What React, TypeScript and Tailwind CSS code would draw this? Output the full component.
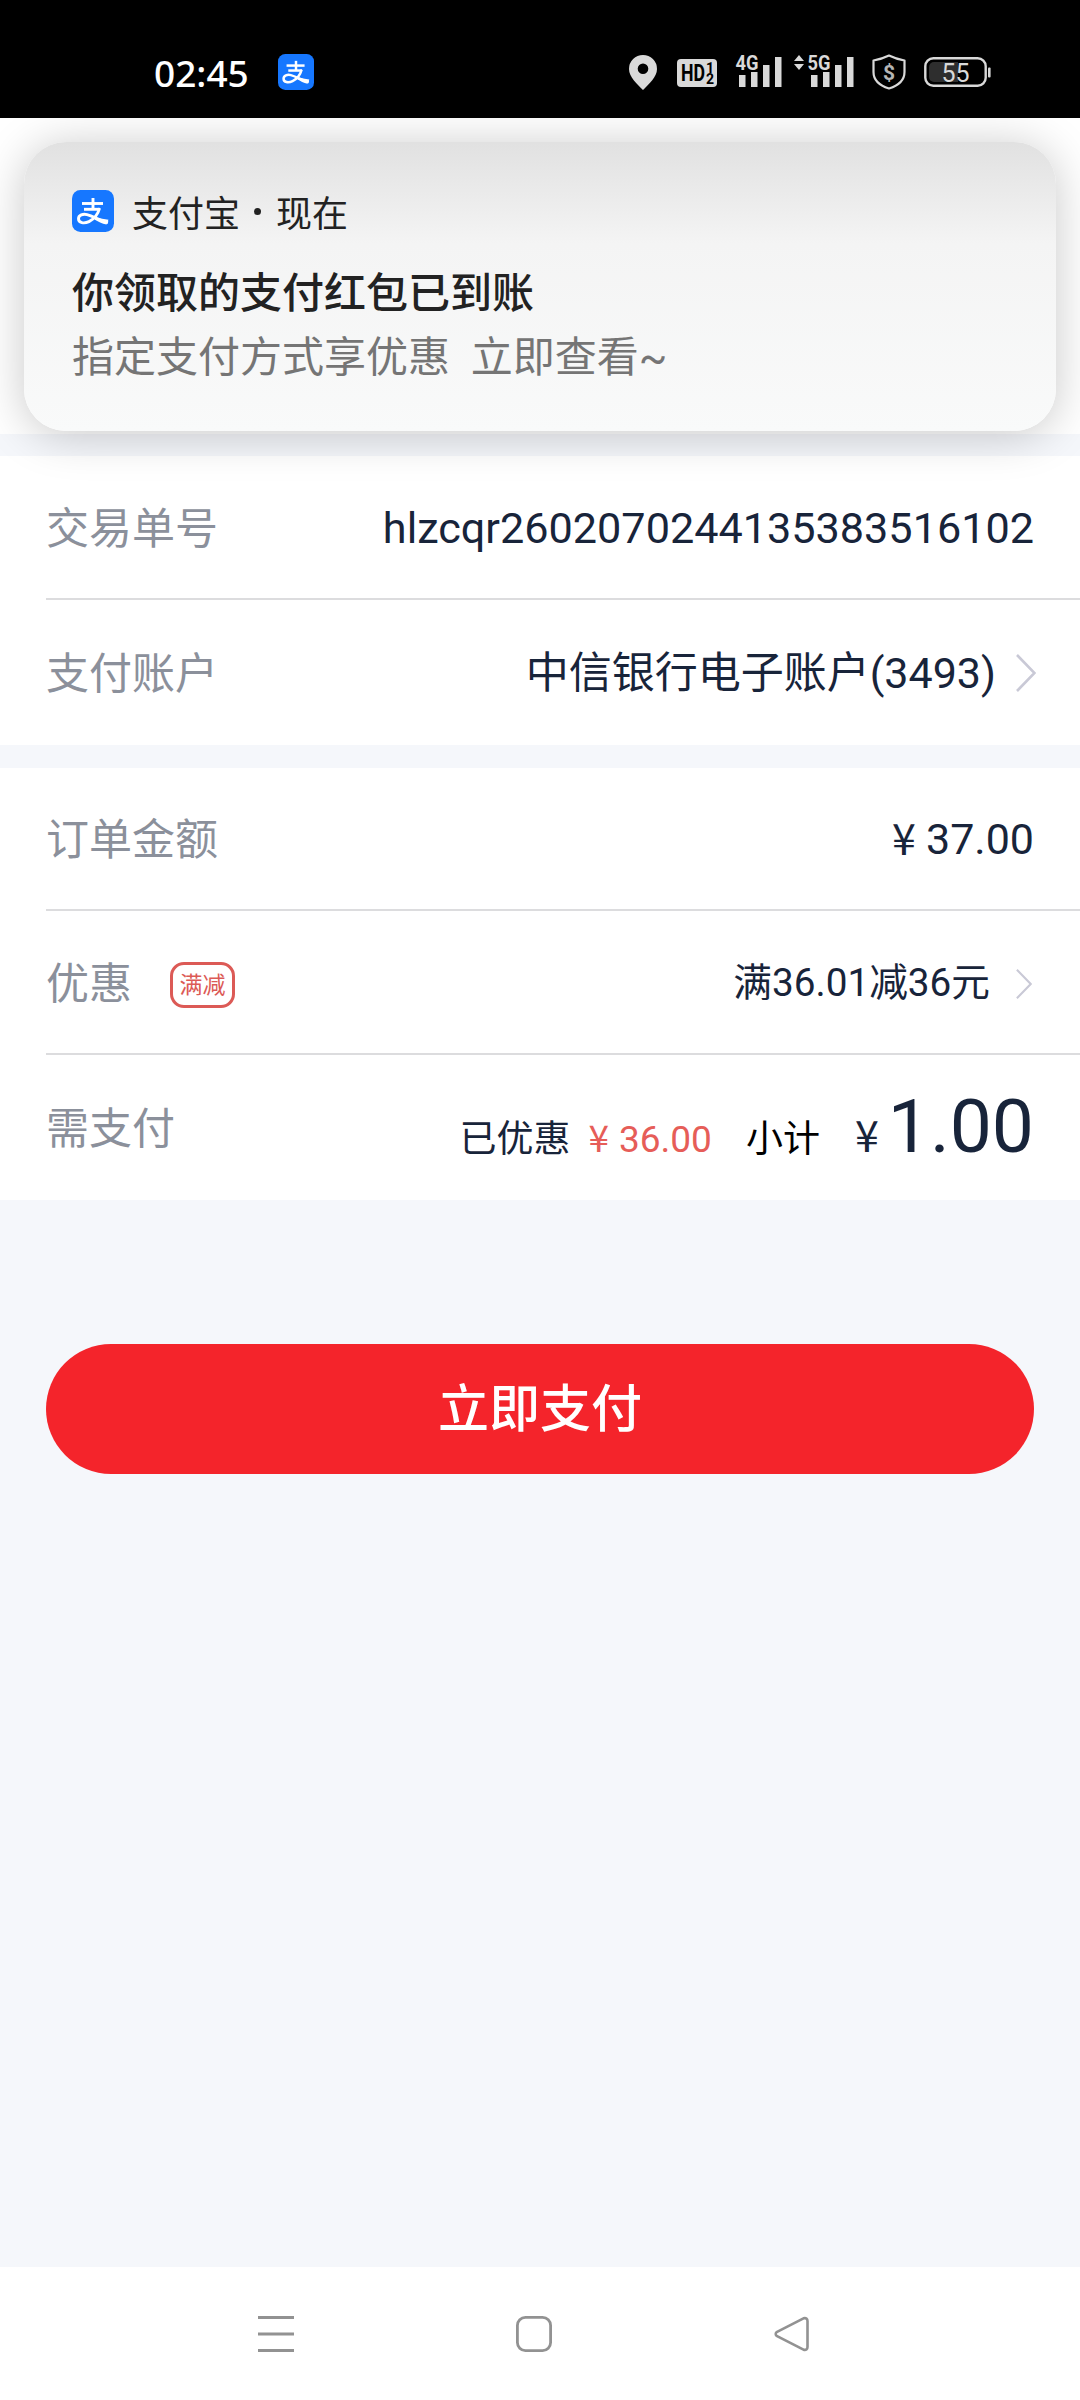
import type { ReactNode } from "react";

const CJK = "font-['Noto_Sans_CJK_SC',sans-serif]";

function AlipayLogo({ className }: { className?: string }) {
  return (
    <svg viewBox="0 0 42 42" className={className} fill="none">
      <rect width="42" height="42" rx="8.5" fill="#1677ff" />
      <g stroke="#fff" strokeWidth="2.9">
        <path d="M10 13.5H31" />
        <path d="M21 8V19" />
        <path d="M12 19.3H28" />
        <path d="M27.6 18.2C26 24 22.500 29 17 31.600C12 34 6.500 33 6.500 28.800C6.500 25 11 23.600 15 24.600C22 26.400 27 30.500 36 32.600" />
      </g>
      <path d="M24 27.800L36.500 29.800L34.500 34.600C30 34 26 31.500 22.500 29.500Z" fill="#fff" />
    </svg>
  );
}

function Signal({ label, arrows }: { label: string; arrows?: boolean }) {
  return (
    <svg viewBox="0 -8 64 52" className="h-[52px] w-16" fill="#d9d9d9">
      {arrows && <path d="M4 7L9 1L14 7ZM4 10L9 16L14 10Z" />}
      <path d="M21 21h6.500v12h-6.500ZM33 18h6.500v15h-6.500ZM45 11h6.500v22h-6.500ZM57 3h6.500v30h-6.500Z" />
      <text
        x="17.500"
        y="16"
        textLength="23"
        lengthAdjust="spacingAndGlyphs"
        className="font-[Roboto,sans-serif] text-[21px] font-bold"
      >
        {label}
      </text>
    </svg>
  );
}

function StatusBar() {
  return (
    <header className="flex h-[118px] items-center bg-black pt-[26px] pl-[154px]">
      <span className="w-[124px] font-['Noto_Sans',sans-serif] text-[37px] leading-none font-medium text-white">
        02:45
      </span>
      <AlipayLogo className="size-9" />
      <div className="ml-[315px] flex items-center text-[#d9d9d9]">
        {/* location pin */}
        <svg viewBox="0 0 28 35" className="h-[35px] w-7" fill="currentColor">
          <path
            fillRule="evenodd"
            d="M14 0A14 14 0 0 0 0 14C0 22 8 29 14 35C20 29 28 22 28 14A14 14 0 0 0 14 0ZM14 8.500a5.300 5.300 0 1 1 0 10.600a5.300 5.300 0 0 1 0-10.600Z"
          />
        </svg>
        <svg viewBox="0 0 40 28" className="mt-px ml-5 h-7 w-10 font-[Roboto,sans-serif] font-bold">
          <rect width="40" height="28" rx="4" fill="currentColor" />
          <text x="4" y="22" fontSize="23" textLength="24" lengthAdjust="spacingAndGlyphs">
            HD
          </text>
          <text x="29" y="13.500" fontSize="14">1</text>
          <text x="29" y="25" fontSize="14">2</text>
        </svg>
        <div className="ml-[1px]">
          <Signal label="4G" />
        </div>
        <div className="ml-2">
          <Signal label="5G" arrows />
        </div>
        <svg viewBox="0 0 34 36" className="ml-[18px] h-9 w-[34px]" fill="none">
          <path
            d="M17 1.500C22 4 27 5.500 32.500 6.500V18C32.500 27 25 32 17 34.500C9 32 1.500 27 1.500 18V6.500C7 5.500 12 4 17 1.500Z"
            stroke="currentColor"
            strokeWidth="2.2"
            strokeLinejoin="round"
          />
          <text
            x="17"
            y="25.500"
            textAnchor="middle"
            fill="#b5b5b5"
            className="font-[Roboto,sans-serif] text-[21px] font-bold"
          >
            $
          </text>
        </svg>
        <svg viewBox="0 0 67 30" className="ml-[18px] h-[30px] w-[67px]" fill="none">
          <rect x="1.300" y="1.300" width="60.400" height="27.400" rx="8" stroke="currentColor" strokeWidth="2.400" />
          <path d="M10 5H34V25H10A5 5 0 0 1 5 20V10A5 5 0 0 1 10 5Z" fill="#2e2e2e" />
          <rect x="64" y="10.500" width="2.600" height="10" rx="1" fill="currentColor" />
          <text x="31.500" y="24.500" textAnchor="middle" fill="#d9d9d9" className="font-[Roboto,sans-serif] text-[25px]">
            55
          </text>
        </svg>
      </div>
    </header>
  );
}

function NotificationCard() {
  return (
    <div
      className={`absolute top-[142px] left-6 h-[289px] w-[1032px] rounded-[42px] bg-linear-to-b from-[#e1e1e1] via-[#f4f4f4] via-35% to-[#f9fafa] pl-12 shadow-[0_4px_46px_rgba(0,0,0,0.22)] ${CJK}`}
    >
      <div className="box-content flex h-[42px] items-center pt-[48px]">
        <AlipayLogo className="size-[42px]" />
        <span className="ml-[18px] text-[36px] leading-none text-[#222]">支付宝</span>
        <span className="mr-[15px] ml-[14px] size-[7px] rounded-full bg-[#222]" />
        <span className="text-[36px] leading-none text-[#222]">现在</span>
      </div>
      <p className="mt-[33px] h-[50px] text-[42px] leading-[50px] font-medium text-[#222]">
        你领取的支付红包已到账
      </p>
      <p className="mt-[18px] font-[Roboto,'Noto_Sans_CJK_SC',sans-serif] text-[42px] leading-[50px] text-[#757575]">
        指定支付方式享优惠{"\u00a0\u00a0"}立即查看~
      </p>
    </div>
  );
}

function Chevron({ className }: { className?: string }) {
  return (
    <svg viewBox="0 0 20 38" className={className} fill="none" stroke="#c9c9d6" strokeWidth="2.600">
      <path d="M1 1L18.500 19L1 37" />
    </svg>
  );
}

type RowProps = {
  label: string;
  tag?: string;
  height?: string;
  last?: boolean;
  children: ReactNode;
};

function Row({ label, tag, height = "h-36", last, children }: RowProps) {
  return (
    <div className={`ml-[46px] flex items-center ${height} ${last ? "" : "border-b-2 border-[#dcdcde]"}`}>
      <span className={`pb-[4px] text-[43px] leading-none text-[#8b909b] ${CJK}`}>{label}</span>
      {tag && (
        <span
          className={`mt-[5px] ml-[38px] flex h-[46px] w-[65px] justify-center rounded-[14px] border-3 border-[#dc5a56] pt-[5px] text-[23px] leading-[26px] text-[#dc5a56] ${CJK}`}
        >
          {tag}
        </span>
      )}
      <div className="ml-auto flex items-center pr-[46px]">{children}</div>
    </div>
  );
}

export default function App() {
  return (
    <div className="relative flex h-[2400px] w-[1080px] flex-col overflow-hidden bg-[#f5f7fb] font-[Roboto,'Noto_Sans_CJK_SC',sans-serif] text-[#18243a]">
      <StatusBar />
      <div className="h-[316px] bg-white" />

      <section className="mt-[22px] bg-white pb-px">
        <Row label="交易单号">
          <span className="pt-[4px] text-[43.2px] leading-none">hlzcqr2602070244135383516102</span>
        </Row>
        <Row label="支付账户" last>
          <span className="pt-[3px] text-[43px] leading-none">中信银行电子账户(3493)</span>
          <Chevron className="mt-[2px] -mr-[2px] ml-[20px] h-[38px] w-5" />
        </Row>
      </section>

      <section className="mt-[23px] bg-white">
        <Row label="订单金额" height="h-[143px]">
          <span className={`mr-[10px] pb-[5px] text-[43px] leading-none ${CJK}`}>¥</span>
          <span className="pt-[1px] text-[43px] leading-none">37.00</span>
        </Row>
        <Row label="优惠" tag="满减">
          <span className="pt-[2px] text-[38.7px] leading-none">满36.01减36元</span>
          <Chevron className="mt-[5px] mr-[2px] ml-[26px] h-[30px] w-4" />
        </Row>
        <Row label="需支付" height="h-[145px]" last>
          <div className="flex items-baseline pb-[3px] leading-none">
            <span className={`text-[37px] ${CJK}`}>已优惠</span>
            <span className={`ml-[18px] text-[37px] text-[#e65d58] ${CJK}`}>¥</span>
            <span className="ml-[10px] text-[37px] text-[#e65d58]">36.00</span>
            <span className={`ml-[34px] text-[37px] text-black ${CJK}`}>小计</span>
            <span className={`ml-[35px] text-[43px] ${CJK}`}>¥</span>
            <span className="ml-[9px] text-[75px]">1.00</span>
          </div>
        </Row>
      </section>

      <button
        className={`mx-[46px] mt-36 h-[130px] rounded-full bg-[#f4242b] pb-[7px] text-[51px] leading-none font-medium text-white ${CJK}`}
      >
        立即支付
      </button>

      {/* system navigation */}
      <nav className="mt-auto flex h-[133px] justify-between bg-white pt-[49px] pr-[270px] pl-[258px]">
        <svg viewBox="0 0 36 36" className="size-9" stroke="#929292" strokeWidth="3">
          <path d="M0 1.500H36M0 18H36M0 34.500H36" />
        </svg>
        <svg viewBox="0 0 36 36" className="size-9" fill="none" stroke="#929292" strokeWidth="2.800">
          <rect x="1.400" y="1.400" width="33.200" height="33.200" rx="8" />
        </svg>
        <svg viewBox="0 0 36 36" className="size-9" fill="none" stroke="#929292" strokeWidth="2.600" strokeLinejoin="round">
          <path d="M29.500 2.300L2.600 16.200Q0.800 18 2.600 19.800L29.500 33.700Q33.500 34.500 33.500 31V5Q33.500 1.500 29.500 2.300Z" />
        </svg>
      </nav>

      <NotificationCard />
    </div>
  );
}
